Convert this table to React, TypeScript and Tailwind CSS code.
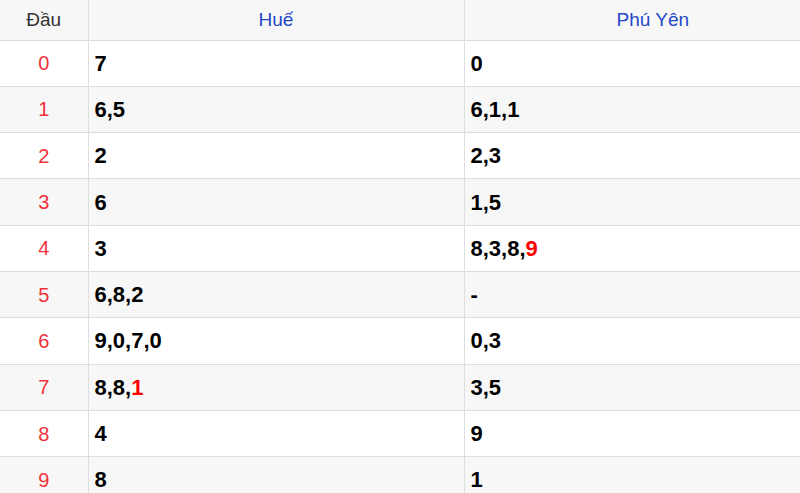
const rows: { d: string; hue: (string | [string])[]; py: (string | [string])[] }[] = [
  { d: "0", hue: ["7"], py: ["0"] },
  { d: "1", hue: ["6,5"], py: ["6,1,1"] },
  { d: "2", hue: ["2"], py: ["2,3"] },
  { d: "3", hue: ["6"], py: ["1,5"] },
  { d: "4", hue: ["3"], py: ["8,3,8,", ["9"]] },
  { d: "5", hue: ["6,8,2"], py: ["-"] },
  { d: "6", hue: ["9,0,7,0"], py: ["0,3"] },
  { d: "7", hue: ["8,8,", ["1"]], py: ["3,5"] },
  { d: "8", hue: ["4"], py: ["9"] },
  { d: "9", hue: ["8"], py: ["1"] },
];

function Cell({ parts }: { parts: (string | [string])[] }) {
  return (
    <>
      {parts.map((p, i) =>
        Array.isArray(p) ? (
          <span key={i} className="text-[#ff0000]">
            {p[0]}
          </span>
        ) : (
          <span key={i}>{p}</span>
        )
      )}
    </>
  );
}

export default function App() {
  return (
    <div className="w-[800px] h-[493px] overflow-hidden bg-white font-['Liberation_Sans',Arial,sans-serif]">
      {/* table is wider than the viewport; right edge gets cropped */}
      <table className="w-[841px] border-collapse table-fixed">
        <thead>
          <tr className="h-[40px] bg-[#f7f7f7] text-[19px]">
            <th className="w-[88px] border-b border-r border-[#dedede] font-normal text-[#333]">Đầu</th>
            <th className="w-[376px] border-b border-r border-[#dedede] font-normal text-[#2448c7]">Huế</th>
            <th className="border-b border-[#dedede] font-normal text-[#2448c7]">Phú Yên</th>
          </tr>
        </thead>
        <tbody>
          {rows.map((r, i) => (
            <tr key={r.d} className={`h-[46.3px] ${i % 2 === 1 ? "bg-[#f7f7f7]" : "bg-white"}`}>
              <td className="border-b border-r border-[#dedede] text-center text-[20px] text-[#f0313a]">{r.d}</td>
              <td className="border-b border-r border-[#dedede] pl-[6px] text-[22px] font-bold text-black">
                <Cell parts={r.hue} />
              </td>
              <td className="border-b border-[#dedede] pl-[6px] text-[22px] font-bold text-black">
                <Cell parts={r.py} />
              </td>
            </tr>
          ))}
        </tbody>
      </table>
    </div>
  );
}
